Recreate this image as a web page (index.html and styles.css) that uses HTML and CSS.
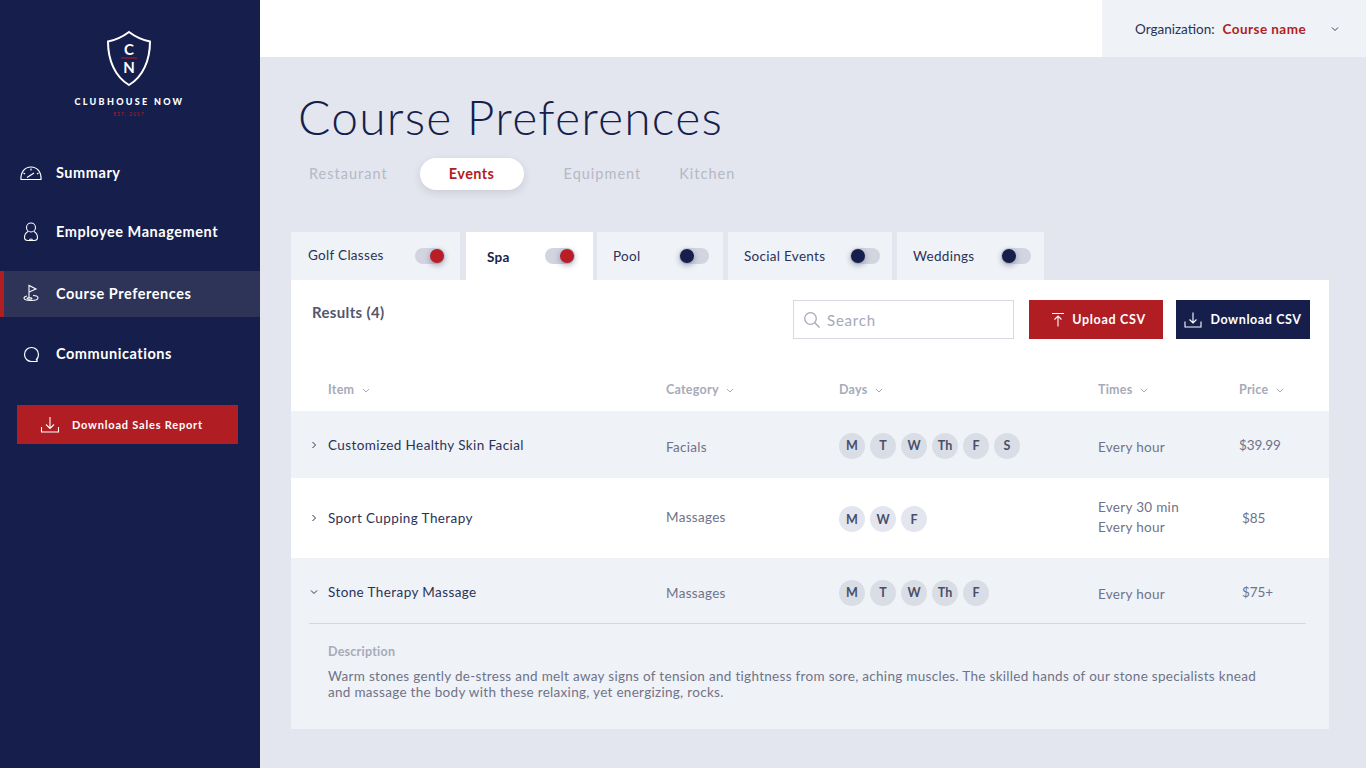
FILE: index.html
```html
<!DOCTYPE html>
<html lang="en">
<head>
    <meta charset="UTF-8">
    <meta name="viewport" content="width=device-width, initial-scale=1.0">
    <title>Course Preferences</title>
    <link rel="stylesheet" href="styles.css">
</head>
<body>
<div class="app">
    <aside class="sidebar">
        <div class="logo">
            <svg class="shield" width="46" height="57" viewBox="0 0 46 57">
                <path d="M23 2C29 6.500 36 10 44 11.500C44 30 37 47 23 55C9 47 2 30 2 11.500C10 10 17 6.500 23 2Z" fill="none" stroke="#fff" stroke-width="2"/>
                <text x="23" y="25" class="shield-letter">C</text>
                <path d="M15 28H31" stroke="#b01e23" stroke-width="1"/>
                <text x="23" y="43" class="shield-letter">N</text>
            </svg>
            <div class="logo-name">CLUBHOUSE NOW</div>
            <div class="logo-est">EST. 2017</div>
        </div>
        <nav class="nav">
            <a class="nav-item">
                <svg width="24" height="16" viewBox="0 0 24 16" fill="none" stroke="#fff" stroke-width="1.200">
                    <path d="M2 14.500C1.500 7 6 2 12 2C18 2 22.500 7 22 14.500Z"/>
                    <path d="M8 12.500L15 8M4.500 8L6 9M12 3.500V5.500M19.500 8L18 9"/>
                </svg>
                <span>Summary</span>
            </a>
            <a class="nav-item nav-item-second">
                <svg width="24" height="20" viewBox="0 0 24 20" fill="none" stroke="#fff" stroke-width="1.100">
                    <circle cx="12" cy="5.500" r="4.500"/>
                    <path d="M9 9.500C6.500 11 5.500 13 5.500 15.500C5.500 18 7 18.500 9 18.500H15C17 18.500 18.500 18 18.500 15.500C18.500 13 17.500 11 15 9.500"/>
                    <path d="M10.500 18.500C10.500 16.500 13.500 16.500 13.500 18.500"/>
                </svg>
                <span>Employee Management</span>
            </a>
            <a class="nav-item nav-item-active">
                <svg width="24" height="20" viewBox="0 0 24 20" fill="none" stroke="#fff" stroke-width="1.100">
                    <path d="M10 14V1.500L17 5L10 8"/>
                    <path d="M14 11.500C18 11.500 19 13 19 14C19 15.500 16 16.500 12 16.500C8 16.500 5 15.500 5 14C5 13.200 6 12.500 8 12"/>
                    <ellipse cx="10.500" cy="14.500" rx="2.500" ry=".8"/>
                </svg>
                <span>Course Preferences</span>
            </a>
            <a class="nav-item nav-item-last">
                <svg width="24" height="20" viewBox="0 0 24 20" fill="none" stroke="#fff" stroke-width="1.200">
                    <path d="M17 16C19 14.500 19.500 12.500 19.500 10.500C19.500 6.500 16.500 3.500 12.500 3.500C8.500 3.500 5.500 6.500 5.500 10.500C5.500 14.500 8.500 17.500 12.500 17.500H18V15"/>
                </svg>
                <span>Communications</span>
            </a>
        </nav>
        <a class="report-btn">
            <svg width="20" height="18" viewBox="0 0 20 18" fill="none" stroke="#fff" stroke-width="1.100">
                <path d="M1.500 11V16H18.500V11M10 1V12M6 8.500L10 12.500L14 8.500"/>
            </svg>
            <span>Download Sales Report</span>
        </a>
    </aside>

    <div class="main">
        <header class="topbar">
            <div class="org">
                <span class="org-label">Organization:</span>
                <span class="org-name">Course name</span>
                <svg class="org-caret" width="8" height="6" viewBox="0 0 8 6" fill="none" stroke="#3a3f5f" stroke-width="1"><path d="M1 1.500L4 4.500L7 1.500"/></svg>
            </div>
        </header>

        <div class="content">
            <h1>Course Preferences</h1>
            <div class="pills">
                <span class="pill pill-restaurant">Restaurant</span>
                <span class="pill pill-active">Events</span>
                <span class="pill pill-equipment">Equipment</span>
                <span class="pill">Kitchen</span>
            </div>

            <div class="tabs">
                <div class="tab tab-golf"><span class="tab-label">Golf Classes</span><span class="toggle toggle-on"><i></i></span></div>
                <div class="tab tab-spa tab-active"><span class="tab-label">Spa</span><span class="toggle toggle-on"><i></i></span></div>
                <div class="tab tab-pool"><span class="tab-label">Pool</span><span class="toggle"><i></i></span></div>
                <div class="tab tab-social"><span class="tab-label">Social Events</span><span class="toggle"><i></i></span></div>
                <div class="tab tab-weddings"><span class="tab-label">Weddings</span><span class="toggle"><i></i></span></div>
            </div>

            <section class="panel">
                <div class="toolbar">
                    <div class="results">Results (4)</div>
                    <div class="search">
                        <svg width="18" height="18" viewBox="0 0 18 18" fill="none" stroke="#a5a8b8" stroke-width="1.300"><circle cx="7.500" cy="7.500" r="5.800"/><path d="M11.800 11.800L16.500 16.500"/></svg>
                        <span>Search</span>
                    </div>
                    <a class="btn btn-red">
                        <svg width="14" height="15" viewBox="0 0 14 15" fill="none" stroke="#fff" stroke-width="1.100"><path d="M1 1.500H13M7 14.500V4M3.500 7.500L7 4L10.500 7.500"/></svg>
                        <span>Upload CSV</span>
                    </a>
                    <a class="btn btn-navy">
                        <svg width="18" height="16" viewBox="0 0 18 16" fill="none" stroke="#fff" stroke-width="1.100"><path d="M1 9.500V15H17V9.500M9 .5V11M5.500 7.500L9 11L12.500 7.500"/></svg>
                        <span>Download CSV</span>
                    </a>
                </div>

                <div class="grid grid-head">
                    <div>Item <svg class="sort" width="8" height="5" viewBox="0 0 8 5"><path d="M1 1L4 4L7 1"/></svg></div>
                    <div>Category <svg class="sort" width="8" height="5" viewBox="0 0 8 5"><path d="M1 1L4 4L7 1"/></svg></div>
                    <div>Days <svg class="sort" width="8" height="5" viewBox="0 0 8 5"><path d="M1 1L4 4L7 1"/></svg></div>
                    <div>Times <svg class="sort" width="8" height="5" viewBox="0 0 8 5"><path d="M1 1L4 4L7 1"/></svg></div>
                    <div>Price <svg class="sort" width="8" height="5" viewBox="0 0 8 5"><path d="M1 1L4 4L7 1"/></svg></div>
                </div>

                <div class="row row-shaded">
                    <div class="grid grid-row row-one">
                        <div class="item"><svg class="chev" width="6" height="8" viewBox="0 0 6 8"><path d="M1.500 1L4.500 4L1.500 7"/></svg>Customized Healthy Skin Facial</div>
                        <div class="muted nudge-down">Facials</div>
                        <div class="days"><b>M</b><b>T</b><b>W</b><b>Th</b><b>F</b><b>S</b></div>
                        <div class="muted nudge-down">Every hour</div>
                        <div class="muted price">$39.99</div>
                    </div>
                </div>

                <div class="row">
                    <div class="grid grid-row row-two">
                        <div class="item"><svg class="chev" width="6" height="8" viewBox="0 0 6 8"><path d="M1.500 1L4.500 4L1.500 7"/></svg>Sport Cupping Therapy</div>
                        <div class="muted nudge-up">Massages</div>
                        <div class="days"><b>M</b><b>W</b><b>F</b></div>
                        <div class="muted times nudge-up">Every 30 min<br>Every hour</div>
                        <div class="muted price price-in">$85</div>
                    </div>
                </div>

                <div class="row row-shaded row-open">
                    <div class="grid grid-row row-three">
                        <div class="item"><svg class="chev chev-open" width="8" height="6" viewBox="0 0 8 6"><path d="M1 1.500L4 4.500L7 1.500"/></svg>Stone Therapy Massage</div>
                        <div class="muted nudge-small">Massages</div>
                        <div class="days"><b>M</b><b>T</b><b>W</b><b>Th</b><b>F</b></div>
                        <div class="muted nudge-down">Every hour</div>
                        <div class="muted price price-in">$75+</div>
                    </div>
                    <div class="detail">
                        <h3>Description</h3>
                        <p>Warm stones gently de-stress and melt away signs of tension and tightness from sore, aching muscles. The skilled hands of our stone specialists knead and massage the body with these relaxing, yet energizing, rocks.</p>
                    </div>
                </div>
            </section>
        </div>
    </div>
</div>
</body>
</html>
```

FILE: styles.css
```css
* { box-sizing: border-box; }
html, body { margin: 0; height: 100%; }
body { font-family: "Lato", "Open Sans", sans-serif; color: #161f4c; background: #e3e6ee; overflow: hidden; }
a { color: inherit; text-decoration: none; }

.app { display: flex; height: 768px; }

/* sidebar */
.sidebar { width: 260px; flex: none; background: #161f4c; color: #fff; }
.logo { height: 150px; padding-top: 30px; display: flex; flex-direction: column; align-items: center; }
.shield { display: block; margin-right: 3px; }
.shield-letter { font-family: "Lato", sans-serif; font-size: 15px; font-weight: 700; fill: #fff; text-anchor: middle; }
.logo-name { margin: 9px 1px 0 0; font-size: 9px; font-weight: 900; letter-spacing: 2.300px; line-height: 11px; }
.logo-est { margin: 4px 2px 0 0; font-size: 5px; letter-spacing: 1px; line-height: 7px; color: #b01e23; }

.nav { display: flex; flex-direction: column; }
.nav-item { display: flex; align-items: center; height: 46px; padding-left: 19px; gap: 13px; font-size: 14.500px; font-weight: 700; letter-spacing: .55px; }
.nav-item svg { flex: none; }
.nav-item span { padding-bottom: 2px; }
.nav-item-second { margin-top: 13px; }
.nav-item-active { margin-top: 16px; background: #2e3457; border-left: 4px solid #b01e23; padding-left: 15px; }
.nav-item-last { margin-top: 14px; }

.report-btn { display: flex; align-items: center; gap: 12px; margin: 28px 22px 0 17px; height: 39px; padding-left: 23px; background: #b01e23; font-size: 11px; font-weight: 700; letter-spacing: .8px; }

/* top */
.main { flex: 1; min-width: 0; }
.topbar { height: 57px; background: #fff; display: flex; justify-content: flex-end; }
.org { width: 264px; background: #eff2f7; display: flex; align-items: center; padding-left: 33px; font-size: 13.500px; }
.org-label { color: #2c3256; }
.org-name { margin-left: 8px; font-weight: 700; color: #b01e23; letter-spacing: .45px; }
.org-caret { margin-left: 25px; }

.content { padding: 0 37px 0 31px; }
h1 { margin: 30px 0 0 7px; font-size: 48px; line-height: 60px; font-weight: 300; letter-spacing: 1.220px; color: #161f4c; }

.pills { display: flex; align-items: center; height: 32px; margin-top: 11px; font-size: 14.500px; letter-spacing: 1px; color: #b5b8c6; }
.pill { padding-bottom: 2px; }
.pill-restaurant { margin-left: 18px; }
.pill-active { display: flex; align-items: center; justify-content: center; width: 104px; height: 32px; margin-left: 32px; border-radius: 16px; background: #fff; color: #b01e23; font-weight: 700; letter-spacing: .4px; box-shadow: 0 3px 8px rgba(22, 31, 76, .12); }
.pill-equipment { margin: 0 38px 0 40px; }

/* tabs */
.tabs { display: flex; margin-top: 42px; height: 48px; }
.tab { display: flex; align-items: center; justify-content: space-between; background: #eff2f7; font-size: 13.500px; color: #2c3256; letter-spacing: .3px; }
.tab-golf { width: 169px; padding: 0 15px 0 17px; margin-right: 6px; }
.tab-golf .tab-label { margin-top: -2px; }
.tab-spa { width: 127px; padding: 0 18px 0 21px; margin-right: 4px; }
.tab-pool { width: 126px; padding: 0 14px 0 16px; margin-right: 5px; }
.tab-social { width: 164px; padding: 0 12px 0 16px; margin-right: 5px; }
.tab-weddings { width: 147px; padding: 0 13px 0 16px; }
.tab-active { background: #fff; font-weight: 700; color: #161f4c; }
.tab-active .tab-label { margin-top: 2px; }
.toggle { position: relative; width: 30px; height: 16px; border-radius: 8px; background: #d2d5e0; }
.toggle i { position: absolute; left: 1px; top: 1px; width: 14px; height: 14px; border-radius: 50%; background: #161f4c; box-shadow: 0 2px 6px rgba(22, 31, 76, .4); }
.toggle-on i { left: 15px; background: #b81e24; }

/* panel */
.panel { display: flex; flex-direction: column; background: #fff; height: 449px; }
.toolbar { display: flex; align-items: flex-start; padding: 20px 19px 0 21px; height: 90px; flex: none; }
.results { margin-right: auto; font-size: 15px; line-height: 24px; font-weight: 700; color: #53566e; letter-spacing: .35px; }
.search { display: flex; align-items: center; gap: 6px; width: 221px; height: 39px; padding: 0 9px; border: 1px solid #d6d8e2; font-size: 15px; letter-spacing: .8px; color: #a5a8b8; }
.btn { display: flex; align-items: center; justify-content: center; height: 39px; width: 134px; margin-left: 15px; color: #fff; font-size: 12.500px; font-weight: 700; letter-spacing: .7px; gap: 7px; }
.btn span { padding-bottom: 1px; }
.btn-red { background: #b01e23; padding-left: 5px; }
.btn-navy { background: #161f4c; margin-left: 13px; gap: 8px; letter-spacing: .6px; }

/* table */
.grid { display: grid; grid-template-columns: 375px 173px 259px 141px 1fr; }
.grid > div:first-child { padding-left: 37px; }
.grid-head { height: 41px; padding-bottom: 2px; align-items: center; font-size: 12.500px; font-weight: 700; letter-spacing: .25px; color: #a7aab9; flex: none; }
.sort { margin-left: 4px; fill: none; stroke: #a7aab9; stroke-width: 1; vertical-align: middle; }

.row-shaded { background: #eff2f7; }
.row-open { flex: 1; }
.grid-row { align-items: center; font-size: 13.500px; }
.row-one { height: 67px; }
.row-two { height: 80px; }
.row-three { height: 65px; padding-top: 2px; }
.item { position: relative; color: #2c3256; letter-spacing: .4px; }
.chev { position: absolute; left: 20px; top: 4px; fill: none; stroke: #2c3256; stroke-width: 1; }
.chev-open { top: 5px; left: 19px; }
.muted { color: #6f7288; letter-spacing: .3px; }
.nudge-down { padding-top: 4px; }
.nudge-small { padding-top: 2px; }
.nudge-up { padding-bottom: 2px; }
.times { line-height: 20px; }
.price { letter-spacing: -.1px; }
.price-in { padding-left: 3px; }
.days { display: flex; gap: 5px; padding-top: 2px; }
.days b { display: flex; align-items: center; justify-content: center; width: 26px; height: 26px; border-radius: 50%; background: #d9dde5; font-size: 12.500px; color: #4a4e69; }
.row-two .days b { background: #e3e6ee; }

.detail { margin: 0 23px 0 18px; padding: 20px 0 0 19px; border-top: 1px solid #d4d7e0; }
.detail h3 { margin: 0; font-size: 12.500px; line-height: 16px; font-weight: 700; color: #a7aab9; letter-spacing: .25px; }
.detail p { margin: 8px 0 0; max-width: 940px; font-size: 13.500px; line-height: 16px; color: #6f7288; letter-spacing: .3px; }
```
